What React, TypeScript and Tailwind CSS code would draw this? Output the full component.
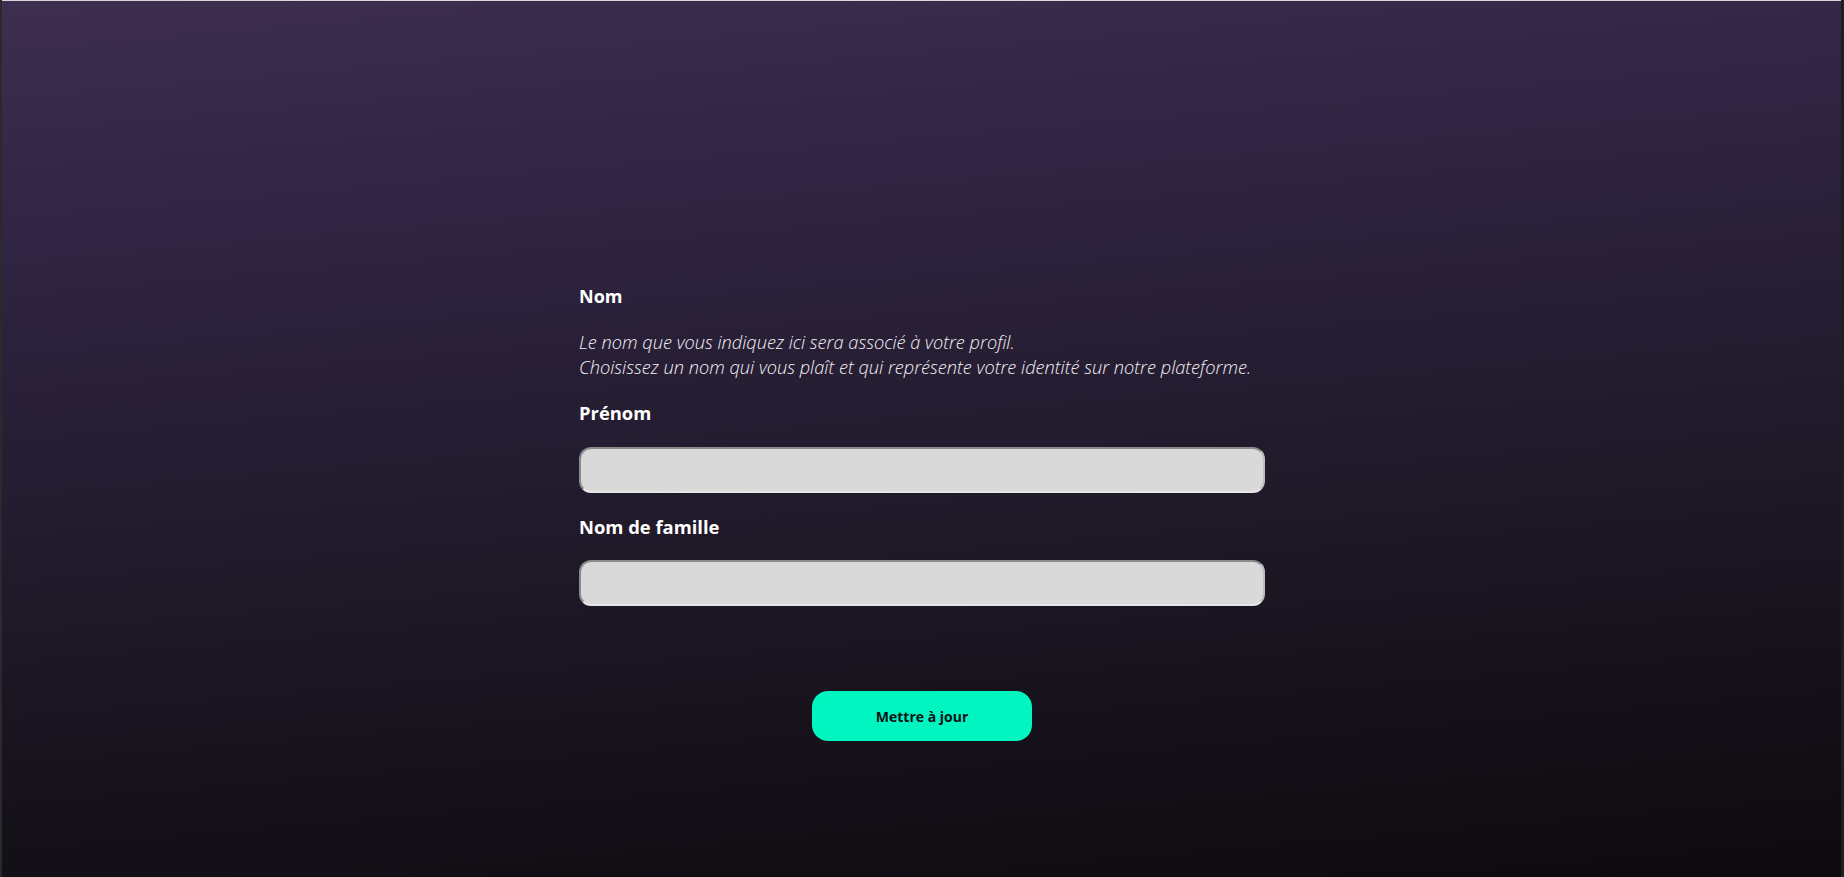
import React from "react";

export default function App() {
  return (
    <div className="relative h-[877px] w-full overflow-hidden bg-[linear-gradient(175deg,#3e2e50_0%,#2f2441_25%,#211a2b_55%,#151119_80%,#0c0a0f_100%)] font-['Open_Sans','Noto_Sans',sans-serif] text-white">
      <div className="absolute left-0 top-0 h-[1px] w-full bg-[#d8d6da]" />
      <div className="absolute left-0 top-0 h-full w-[2px] bg-[#2a2a2e]" />
      <div className="absolute right-0 top-0 h-full w-[3px] bg-[#1f1f22]" />
      <div className="mx-auto flex w-[686px] flex-col pt-[284px]">
        <h2 className="h-[24px] text-[18px] font-bold leading-[24px]">Nom</h2>
        <p className="mt-[22px] text-[18.2px] font-light italic leading-[25px] text-[#f3f1f6]">
          Le nom que vous indiquez ici sera associé à votre profil.
          <br />
          Choisissez un nom qui vous plaît et qui représente votre identité sur notre plateforme.
        </p>
        <label className="mt-[21px] h-[24px] text-[18.4px] font-bold leading-[24px]">Prénom</label>
        <input
          type="text"
          className="mt-[22px] h-[46px] w-full rounded-[12px] border-2 border-t-[#8a8a8a] border-l-[#8a8a8a] border-r-[#bdbdbd] border-b-[#e6e6e6] bg-[#d9d9d9] px-3 text-black outline-none"
        />
        <label className="mt-[22px] h-[24px] text-[18.4px] font-bold leading-[24px]">Nom de famille</label>
        <input
          type="text"
          className="mt-[21px] h-[46px] w-full rounded-[12px] border-2 border-t-[#8a8a8a] border-l-[#8a8a8a] border-r-[#bdbdbd] border-b-[#e6e6e6] bg-[#d9d9d9] px-3 text-black outline-none"
        />
        <button className="mx-auto mt-[85px] h-[50px] w-[220px] rounded-[16px] bg-[#00f5c0] text-[14px] font-bold text-[#111016]">
          Mettre à jour
        </button>
      </div>
    </div>
  );
}
